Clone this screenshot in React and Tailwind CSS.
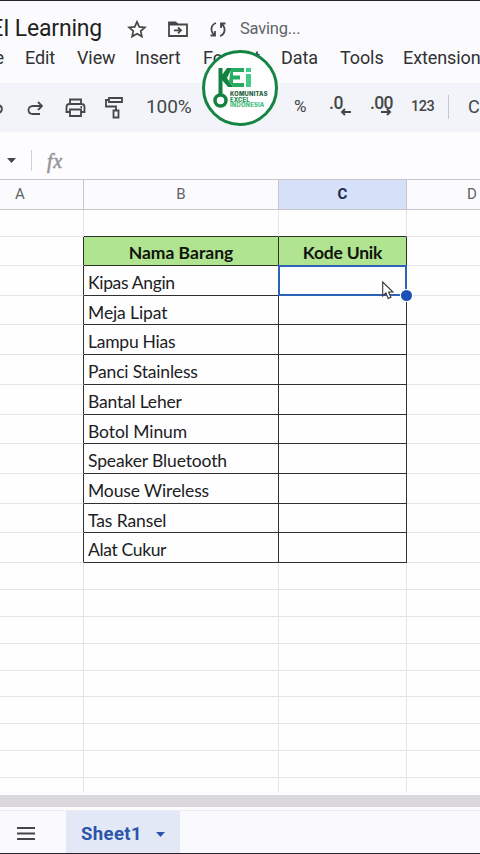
import React from 'react';

const items = [
	{ name: 'Kipas Angin', spacing: 'tracking-[-0.33px]' },
	{ name: 'Meja Lipat', spacing: 'tracking-[-0.1px]' },
	{ name: 'Lampu Hias', spacing: 'tracking-[-0.25px]' },
	{ name: 'Panci Stainless', spacing: 'tracking-[-0.17px]' },
	{ name: 'Bantal Leher', spacing: 'tracking-[-0.2px]' },
	{ name: 'Botol Minum', spacing: 'tracking-[-0.08px]' },
	{ name: 'Speaker Bluetooth', spacing: 'tracking-[-0.14px]' },
	{ name: 'Mouse Wireless', spacing: 'tracking-[-0.12px]' },
	{ name: 'Tas Ransel', spacing: 'tracking-[-0.1px]' },
	{ name: 'Alat Cukur', spacing: 'tracking-[-0.35px]' },
];

const menus = [
	{ label: 'Edit', width: 'w-[52px]' },
	{ label: 'View', width: 'w-[58px]' },
	{ label: 'Insert', width: 'w-[68px]' },
	{ label: 'Format', width: 'w-[78px]' },
	{ label: 'Data', width: 'w-[59px]' },
	{ label: 'Tools', width: 'w-[63px]' },
	{ label: 'Extensions', width: 'w-[90px]' },
];

const emptyRows = [1, 2, 3, 4, 5, 6, 7, 8];

const TitleBar = () => (
	<div className="flex h-[39px] items-end">
		<div className="flex h-[21px] w-[102px] shrink-0 items-center justify-end whitespace-nowrap text-[23px] tracking-[-0.2px] text-[#1f1f1f]">
			KEI Learning
		</div>
		<svg className="ml-[25px] h-5 w-5 shrink-0" viewBox="0 0 20 20" fill="none" stroke="#444746" strokeWidth="1.7">
			<path d="M10 1.8l2.3 5.1 5.6.5-4.2 3.7 1.2 5.5-4.9-2.9-4.9 2.9 1.2-5.500-4.200-3.700 5.600-.5z" />
		</svg>
		<svg className="ml-5 h-5 w-[22px] shrink-0" viewBox="0 0 22 20" fill="none" stroke="#444746" strokeWidth="1.8">
			<path d="M2 4.500h18v11.500H2z" />
			<path d="M2 4.500V2.500h6.500l2 2" fill="#444746" />
			<path d="M7 10.300h7M11 7.300l3 3-3 3" />
		</svg>
		<svg className="ml-5 h-5 w-[18px] shrink-0" viewBox="0 0 18 20" fill="none" stroke="#444746" strokeWidth="1.8">
			<path d="M7 3C1.500 5 1 11.500 5.500 15M1.500 15.500h4.500v-4.500" />
			<path d="M11 16c5.500-2 6-8.500 1.500-12M16.500 3.500H12v4.500" />
		</svg>
		<span className="ml-[13px] flex h-[20px] items-center text-[16.500px] tracking-[-0.2px] text-[#5f6368]">Saving...</span>
	</div>
);

const MenuBar = () => (
	<div className="flex h-[43px] pt-[7px] text-[18px] leading-[22px] tracking-[-0.1px] text-[#303134]">
		<span className="flex w-[25px] shrink-0 justify-end pr-[21px]">File</span>
		{menus.map((menu) => (
			<span key={menu.label} className={`${menu.width} shrink-0 whitespace-nowrap`}>
				{menu.label}
			</span>
		))}
	</div>
);

const Toolbar = () => (
	<div className="flex h-[50px] items-center bg-[#f2f4fa] text-[#444746]">
		<svg className="h-6 w-[27px] shrink-0" viewBox="0 0 27 24" fill="none" stroke="#444746" strokeWidth="1.8">
			<path d="M-7 10H-3C3.500 10 3.500 18-3 18" />
		</svg>
		<svg className="h-6 w-4 shrink-0" viewBox="0 0 16 24" fill="none" stroke="#444746" strokeWidth="1.8">
			<path d="M15 11H6C0 11 0 19 6 19h7M11 7l4 4-4 4" />
		</svg>
		<svg className="ml-[22px] h-6 w-[21px] shrink-0" viewBox="0 0 21 24" fill="none" stroke="#444746" strokeWidth="1.8">
			<path d="M5 9V4.500h11V9M5 17H1.500V12c0-2 1-3 3-3h12c2 0 3 1 3 3v5H16" />
			<path d="M5 14.500h11V21H5z" />
			<path d="M15.500 12h1.500" />
		</svg>
		<svg className="ml-[19px] h-6 w-[18px] shrink-0" viewBox="0 0 18 24" fill="none" stroke="#444746" strokeWidth="1.8">
			<path d="M4 3h13v4H4zM4 5H1v6.500h10v4M8.500 15.500h5v7h-5z" />
		</svg>
		<span className="ml-[23px] w-[148px] shrink-0 pb-px text-[19px] tracking-[-0.1px]">100%</span>
		<span className="w-[35px] shrink-0 pb-px text-[17px]">%</span>
		<span className="relative w-[41px] shrink-0 pb-[8px] text-[17.500px] font-medium tracking-[-0.4px]">
			.0
			<svg className="absolute left-[11px] top-[18px] h-2 w-3" viewBox="0 0 12 8" fill="none" stroke="#444746" strokeWidth="1.900">
				<path d="M11 4H2M5 1L2 4l3 3" />
			</svg>
		</span>
		<span className="relative w-[41px] shrink-0 pb-[8px] text-[17.500px] font-medium tracking-[-0.600px]">
			.00
			<svg className="absolute left-[10px] top-[18px] h-2 w-3" viewBox="0 0 12 8" fill="none" stroke="#444746" strokeWidth="1.900">
				<path d="M1 4h9M7 1l3 3-3 3" />
			</svg>
		</span>
		<span className="w-[37px] shrink-0 pb-[2px] text-[14.500px] font-medium tracking-[-0.5px]">123</span>
		<span className="h-6 w-px shrink-0 bg-[#c7c7cf]" />
		<span className="ml-[19px] shrink-0 pb-[2px] text-[18px] tracking-[0.5px]">Calibri</span>
	</div>
);

const FormulaBar = () => (
	<div className="flex h-[47px] items-center bg-[#fdfcfe] pt-[10px]">
		<svg className="ml-[7px] h-[5px] w-[9px]" viewBox="0 0 9 5">
			<path d="M0 0h9L4.500 5z" fill="#444746" />
		</svg>
		<span className="ml-[15px] h-[21px] w-px bg-[#d0d0d6]" />
		<span className="ml-[15px] font-['Liberation_Serif',serif] text-[20px] italic leading-5 tracking-[0.6px] text-[#96969b] [-webkit-text-stroke:0.6px_#96969b]">
			fx
		</span>
	</div>
);

const ColumnHeaders = () => (
	<div className="flex h-[31px] shrink-0 border-y border-[#c8c6cc] text-[15px] leading-[29px] text-[#5f6368]">
		<div className="w-[84px] border-r border-[#c8c6cc] pl-[15px]">A</div>
		<div className="w-[195px] border-r border-[#c8c6cc] text-center">B</div>
		<div className="w-[128px] border-r border-[#c8c6cc] bg-[#d6e0f8] text-center font-bold text-[#1b2a4e]">C</div>
		<div className="w-[73px] pl-[60px]">D</div>
	</div>
);

const GridRow = () => (
	<div className="flex min-h-0 flex-1">
		<div className="w-[84px] border-b border-r border-[#e6e2ea]" />
		<div className="w-[195px] border-b border-r border-[#e6e2ea]" />
		<div className="w-[128px] border-b border-r border-[#e6e2ea]" />
		<div className="w-[73px] border-b border-[#e6e2ea]" />
	</div>
);

const Sheet = () => (
	<div className="flex h-[582px] shrink-0 flex-col bg-[#fefefe] font-['Lato',sans-serif] text-[#202024]">
		<div className="flex h-[27px]">
			<div className="w-[84px] border-b border-r border-[#e6e2ea]" />
			<div className="w-[195px] border-b border-r border-b-[#2b3326] border-r-[#e6e2ea]" />
			<div className="w-[128px] border-b border-r border-b-[#2b3326] border-r-[#e6e2ea]" />
			<div className="w-[73px] border-b border-[#e6e2ea]" />
		</div>
		<div className="flex h-[29px] text-center text-[17.500px] font-bold leading-[31px] text-[#10140e]">
			<div className="w-[84px] border-b border-r border-b-[#e6e2ea] border-r-[#2b3326]" />
			<div className="w-[195px] border-b border-r border-[#2b3326] bg-[#b0e490]">Nama Barang</div>
			<div className="w-[128px] border-b border-r border-[#2b3326] bg-[#b0e490] tracking-[-0.2px]">Kode Unik</div>
			<div className="w-[73px] border-b border-[#e6e2ea]" />
		</div>
		<div className="relative flex h-[297px] flex-col">
			{items.map((item) => (
				<div key={item.name} className="flex min-h-0 flex-1">
					<div className="w-[84px] border-b border-r border-b-[#e6e2ea] border-r-[#303030]" />
					<div className={`${item.spacing} w-[195px] whitespace-nowrap border-b border-r border-[#303030] pl-[4px] text-[17.500px] leading-[33px]`}>
						{item.name}
					</div>
					<div className="w-[128px] border-b border-r border-[#303030]" />
					<div className="w-[73px] border-b border-[#e6e2ea]" />
				</div>
			))}
			{/* active cell with its fill handle */}
			<div className="absolute left-[278px] top-[-1px] h-[31px] w-[129px] border-2 border-[#2d62b8]">
				<span className="absolute -bottom-[7px] -right-[7px] h-[11px] w-[11px] rounded-full bg-[#1b50b4] ring-1 ring-white" />
				<svg className="absolute left-[102px] top-[14px] h-[19px] w-3" viewBox="0 0 12 19">
					<path d="M.7 1v14l3.200-3 2.300 5.500 2.700-1.200L6.600 11h4.400z" fill="#fff" stroke="#333" strokeWidth="1.100" />
				</svg>
			</div>
		</div>
		<div className="flex h-[215px] flex-col">
			{emptyRows.map((row) => (
				<GridRow key={row} />
			))}
		</div>
		<div className="flex h-[14px]">
			<div className="w-[84px] border-r border-[#e6e2ea]" />
			<div className="w-[195px] border-r border-[#e6e2ea]" />
			<div className="w-[128px] border-r border-[#e6e2ea]" />
		</div>
	</div>
);

const SheetTabs = () => (
	<div className="flex h-[43px] shrink-0 border-t border-[#ececf0] bg-[#f9f9fe]">
		<svg className="ml-[17px] mt-[16px] h-[13px] w-[18px]" viewBox="0 0 18 13" stroke="#444746" strokeWidth="1.800">
			<path d="M0 1h18M0 6.500h18M0 12h18" />
		</svg>
		<div className="ml-[31px] flex h-full w-[114px] items-center bg-[#e2e8f6] pl-[15px] pt-[5px] text-[18.500px] font-bold tracking-[0.4px] text-[#2b55ab]">
			Sheet1
			<svg className="ml-[14px] h-[5px] w-[9px]" viewBox="0 0 9 5">
				<path d="M0 0h9L4.500 5z" fill="#2b55ab" />
			</svg>
		</div>
	</div>
);

const Logo = () => (
	<div className="absolute left-[202px] top-[49px] h-[76px] w-[76px] rounded-full border-[3px] border-[#168442] bg-white font-['Inter',sans-serif]">
		<svg className="absolute left-[7px] top-[14px] h-[42px] w-[42px]" viewBox="0 0 42 42" fill="none">
			<path d="M8.500 1v28" stroke="#13813f" strokeWidth="4" />
			<path d="M20 1h-5l-5 7v5l6 7h5l-6-9z" fill="#13813f" />
			<circle cx="8.500" cy="33.500" r="5.500" stroke="#13813f" strokeWidth="3.500" />
			<path d="M19 1h13v4H21v3.500h7v4h-7V16h11v4H21l-4-6z" fill="#27ab61" />
			<path d="M34 1h5v4h-5zM34 7h5v13h-5z" fill="#42cb86" />
		</svg>
		<div className="absolute left-[25px] top-[38px] text-[5.800px] font-extrabold leading-[5.700px] tracking-[0.200px]">
			<div className="text-[#1c5c3a]">KOMUNITAS</div>
			<div className="text-[#218b4e]">EXCEL</div>
			<div className="text-[#45bd7c]">INDONESIA</div>
		</div>
	</div>
);

const App = () => {
	return (
		<main className="relative flex h-[854px] w-[480px] flex-col overflow-hidden border-y border-[#26242a] bg-[#fbfbfd] font-['Roboto',sans-serif]">
			<TitleBar />
			<MenuBar />
			<Toolbar />
			<FormulaBar />
			<ColumnHeaders />
			<Sheet />
			<div className="mt-[3px] h-[12px] shrink-0 bg-[#dad8dc]" />
			<div className="h-[3px] shrink-0 bg-[#fcfcfd]" />
			<SheetTabs />
			<Logo />
		</main>
	);
};

export default App;
